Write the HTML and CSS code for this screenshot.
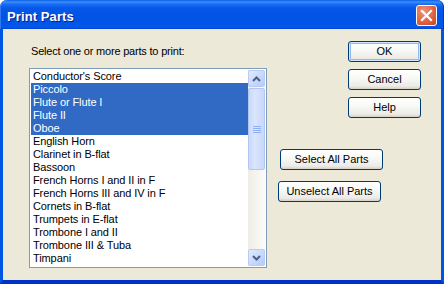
FILE: index.html
```html
<!DOCTYPE html>
<html>
<head>
<meta charset="utf-8">
<link rel="stylesheet" href="styles.css">
</head>
<body>
<div class="window">
  <div class="titlebar">
    <span class="title">Print Parts</span>
    <div class="close">
      <svg width="13" height="13" viewBox="0 0 13 13"><path d="M2 2 L11 11 M11 2 L2 11" stroke="#fff" stroke-width="2.2" stroke-linecap="square"/></svg>
    </div>
  </div>
  <div class="client">
    <div class="left">
      <div class="label">Select one or more parts to print:</div>
      <div class="listbox">
        <ul class="items">
          <li>Conductor's Score</li>
          <li class="sel">Piccolo</li>
          <li class="sel">Flute or Flute I</li>
          <li class="sel">Flute II</li>
          <li class="sel">Oboe</li>
          <li>English Horn</li>
          <li>Clarinet in B-flat</li>
          <li>Bassoon</li>
          <li>French Horns I and II in F</li>
          <li>French Horns III and IV in F</li>
          <li>Cornets in B-flat</li>
          <li>Trumpets in E-flat</li>
          <li>Trombone I and II</li>
          <li>Trombone III &amp; Tuba</li>
          <li>Timpani</li>
        </ul>
        <div class="scrollbar">
          <div class="sb-btn">
            <svg width="9" height="6" viewBox="0 0 9 6"><path d="M1 5 L4.5 1.5 L8 5" fill="none" stroke="#4d6185" stroke-width="2"/></svg>
          </div>
          <div class="track">
            <div class="thumb">
              <svg width="8" height="8" viewBox="0 0 8 8"><path d="M0 1.5H8M0 3.5H8M0 5.5H8M0 7.5H8" stroke="#8fb0f5" stroke-width="1"/></svg>
            </div>
          </div>
          <div class="sb-btn">
            <svg width="9" height="6" viewBox="0 0 9 6"><path d="M1 1 L4.5 4.5 L8 1" fill="none" stroke="#4d6185" stroke-width="2"/></svg>
          </div>
        </div>
      </div>
    </div>
    <div class="right">
      <div class="dlg-buttons">
        <div class="btn default">OK</div>
        <div class="btn">Cancel</div>
        <div class="btn">Help</div>
      </div>
      <div class="sel-buttons">
        <div class="btn wide shift">Select All Parts</div>
        <div class="btn wide">Unselect All Parts</div>
      </div>
    </div>
  </div>
</div>
</body>
</html>
```

FILE: styles.css
```css
html, body {
  margin: 0;
  padding: 0;
  background: #ffffff;
}
.window {
  width: 444px;
  height: 284px;
  display: flex;
  flex-direction: column;
  font-family: "Liberation Sans", Arial, sans-serif;
  font-size: 11px;
  color: #000;
}
.titlebar {
  height: 29px;
  flex: none;
  box-sizing: border-box;
  display: flex;
  align-items: flex-start;
  justify-content: space-between;
  border-radius: 7px 7px 0 0;
  background: linear-gradient(to bottom, #0a5ee8 0px, #3d8ff8 2px, #1b6ff3 4px, #0558ea 8px, #0054e3 16px, #0055e6 24px, #0559ed 27px, #0041cc 29px);
  box-shadow: inset 1px 0 0 #2f7af3, inset -1px 0 0 #003bc8;
  padding: 5px 6px 0 7px;
}
.title {
  color: #fff;
  font-weight: bold;
  font-size: 13px;
  line-height: 18px;
  margin-top: 3px;
  text-shadow: 1px 1px 0 #0a1e80;
  letter-spacing: 0.1px;
}
.close {
  width: 21px;
  height: 21px;
  box-sizing: border-box;
  border: 1px solid #fff;
  border-radius: 3px;
  background: radial-gradient(circle at 35% 30%, #f0957a 0%, #e36d4b 45%, #c8421e 100%);
  display: flex;
  align-items: center;
  justify-content: center;
  margin-right: 1px;
}
.client {
  flex: 1;
  display: flex;
  background: #ece9d8;
  border-left: 3px solid #0055e5;
  border-right: 3px solid #0055e5;
  border-bottom: 4px solid #0032c8;
  padding: 12px 0 0 26px;
}
.left {
  width: 238px;
  display: flex;
  flex-direction: column;
}
.label {
  margin-top: 4px;
  line-height: 13px;
  height: 13px;
  padding-left: 2px;
  margin-bottom: 10px;
  letter-spacing: -0.2px;
}
.listbox {
  height: 200px;
  box-sizing: border-box;
  border: 1px solid #7f9db9;
  background: #fff;
  padding: 1px;
  display: flex;
}
.items {
  list-style: none;
  margin: 0;
  padding: 0;
  flex: 1;
}
.items li {
  height: 13px;
  line-height: 13px;
  padding-left: 2px;
  white-space: nowrap;
  letter-spacing: -0.1px;
}
.items li.sel {
  background: #316ac5;
  color: #fff;
}
.scrollbar {
  width: 17px;
  display: flex;
  flex-direction: column;
  background: linear-gradient(to right, #eeede5, #fbfbf9);
}
.sb-btn {
  height: 17px;
  flex: none;
  box-sizing: border-box;
  border: 1px solid #b7cbf5;
  border-radius: 2px;
  background: linear-gradient(135deg, #e3ecfe 0%, #c6d6fb 60%, #b6cbf7 100%);
  display: flex;
  align-items: center;
  justify-content: center;
}
.track {
  flex: 1;
  padding-top: 1px;
}
.thumb {
  height: 82px;
  box-sizing: border-box;
  border: 1px solid #b2c6f1;
  border-radius: 2px;
  background: linear-gradient(to right, #cad9fc 0%, #dae5fd 40%, #c8d7fb 100%);
  display: flex;
  align-items: center;
  justify-content: center;
}
.right {
  margin-left: 11px;
  display: flex;
  flex-direction: column;
}
.dlg-buttons {
  display: flex;
  flex-direction: column;
  gap: 7px;
  margin-left: 70px;
}
.sel-buttons {
  display: flex;
  flex-direction: column;
  gap: 11px;
  margin-top: 31px;
}
.btn {
  width: 73px;
  height: 21px;
  box-sizing: border-box;
  border: 1px solid #003c74;
  border-radius: 3px;
  background: linear-gradient(to bottom, #ffffff 0%, #f9f9f6 40%, #ecebe6 85%, #d6d0c5 100%);
  display: flex;
  align-items: center;
  justify-content: center;
  line-height: 13px;
}
.btn.default {
  box-shadow: inset 0 0 0 1px #cee7ff, inset 0 0 0 2px #98b8ea;
}
.btn.wide {
  width: 103px;
}
.btn.shift {
  margin-left: 2px;
}
```
